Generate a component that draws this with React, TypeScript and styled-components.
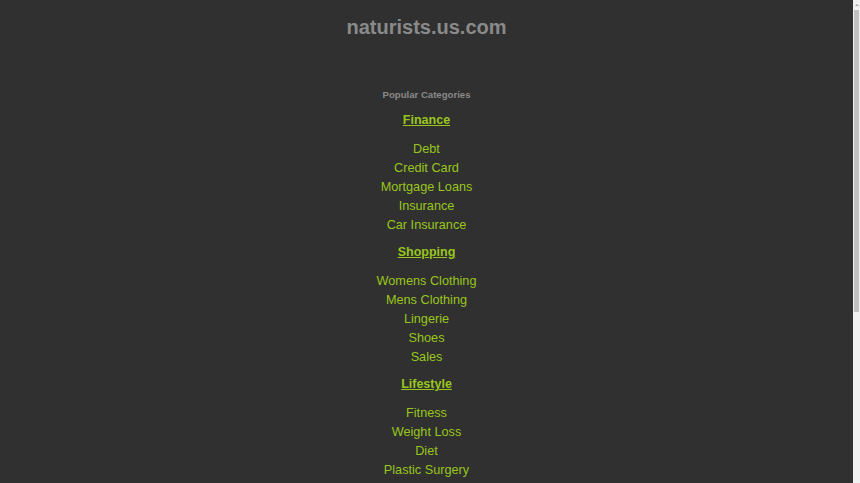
import React from 'react';
import styled, { createGlobalStyle } from 'styled-components';

const GlobalStyle = createGlobalStyle`
  html, body {
    margin: 0;
    padding: 0;
    background: #303030;
    height: 100%;
    overflow: hidden;
  }
  body {
    font-family: "Liberation Sans", Arial, sans-serif;
  }
`;

const Frame = styled.div`
  display: flex;
  height: 100vh;
`;

const Viewport = styled.div`
  flex: 1;
  overflow: hidden;
`;

const Rail = styled.div`
  width: 7px;
  flex-shrink: 0;
  background: #f1f1f1;
  display: flex;
  flex-direction: column;
  align-items: center;
`;

const Arrow = styled.div`
  margin-top: 4px;
  width: 0;
  height: 0;
  border-left: 2px solid transparent;
  border-right: 2px solid transparent;
  border-bottom: 2px solid #a3a3a3;
`;

const Thumb = styled.div`
  margin-top: 4px;
  width: 5px;
  height: 302px;
  background: #c1c1c1;
`;

const Page = styled.div`
  display: flex;
  flex-direction: column;
  align-items: center;
  padding-top: 15px;
`;

const Title = styled.h1`
  margin: 0;
  font-size: 20px;
  line-height: 24px;
  font-weight: bold;
  color: #8a8a8a;
`;

const Categories = styled.section`
  margin-top: 49px;
  display: flex;
  flex-direction: column;
  align-items: center;
`;

const Label = styled.h3`
  margin: 0 0 9px;
  font-size: 9.6px;
  line-height: 14px;
  font-weight: bold;
  color: #8a8a8a;
`;

const Group = styled.div`
  display: flex;
  flex-direction: column;
  align-items: center;
  & + & {
    margin-top: 8px;
  }
`;

const Heading = styled.a`
  font-size: 12.5px;
  line-height: 19px;
  font-weight: bold;
  color: #99c61c;
  text-decoration: underline;
  margin-bottom: 10px;
`;

const List = styled.ul`
  list-style: none;
  margin: 0;
  padding: 0;
  text-align: center;
`;

const Item = styled.li`
  font-size: 12.7px;
  line-height: 19px;
`;

const ItemLink = styled.a`
  color: #99c61c;
  text-decoration: none;
`;

const groups = [
  { title: 'Finance', items: ['Debt', 'Credit Card', 'Mortgage Loans', 'Insurance', 'Car Insurance'] },
  { title: 'Shopping', items: ['Womens Clothing', 'Mens Clothing', 'Lingerie', 'Shoes', 'Sales'] },
  { title: 'Lifestyle', items: ['Fitness', 'Weight Loss', 'Diet', 'Plastic Surgery'] },
];

export default function App() {
  return (
    <>
      <GlobalStyle />
      <Frame>
        <Viewport>
          <Page>
            <Title>naturists.us.com</Title>
            <Categories>
              <Label>Popular Categories</Label>
              {groups.map(g => (
                <Group key={g.title}>
                  <Heading href="#">{g.title}</Heading>
                  <List>
                    {g.items.map(i => (
                      <Item key={i}>
                        <ItemLink href="#">{i}</ItemLink>
                      </Item>
                    ))}
                  </List>
                </Group>
              ))}
            </Categories>
          </Page>
        </Viewport>
        <Rail>
          <Arrow />
          <Thumb />
        </Rail>
      </Frame>
    </>
  );
}
